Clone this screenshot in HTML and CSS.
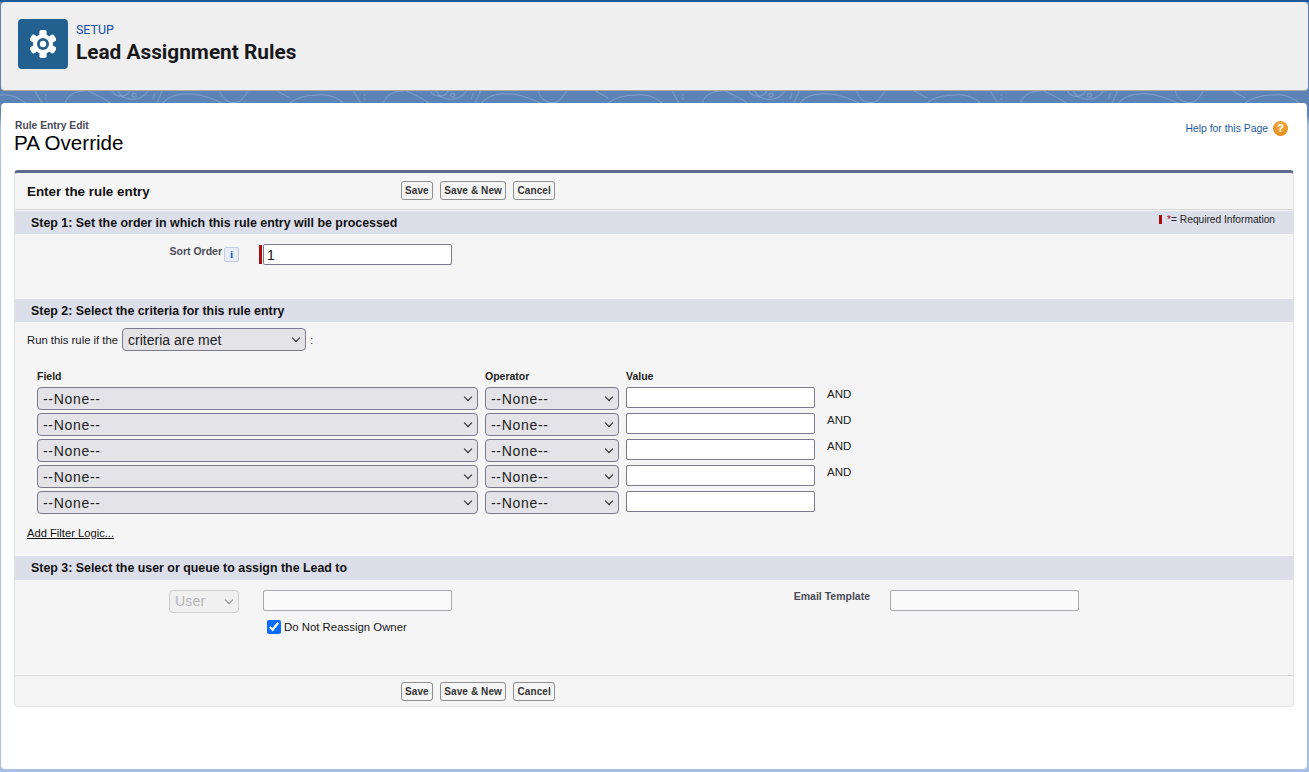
FILE: index.html
```html
<!DOCTYPE html>
<html lang="en">
<head>
    <meta charset="UTF-8">
    <meta name="viewport" content="width=device-width, initial-scale=1.0">
    <title>Lead Assignment Rules</title>
    <link rel="stylesheet" href="styles.css">
</head>
<body>
    <!-- Setup header -->
    <div class="setup-header">
        <div class="setup-icon">
            <svg width="26" height="28" viewBox="-13 -14 26 28">
                <g fill="#fff">
                    <circle r="10"/>
                    <rect x="-3.6" y="-14" width="7.2" height="6" rx="1.8"/>
                    <rect x="-3.6" y="-14" width="7.2" height="6" rx="1.8" transform="rotate(60)"/>
                    <rect x="-3.6" y="-14" width="7.2" height="6" rx="1.8" transform="rotate(120)"/>
                    <rect x="-3.6" y="-14" width="7.2" height="6" rx="1.8" transform="rotate(180)"/>
                    <rect x="-3.6" y="-14" width="7.2" height="6" rx="1.8" transform="rotate(240)"/>
                    <rect x="-3.6" y="-14" width="7.2" height="6" rx="1.8" transform="rotate(300)"/>
                </g>
                <circle r="6" fill="#22608f"/>
                <circle r="3.2" fill="#fff"/>
            </svg>
        </div>
        <div>
            <div class="setup-crumb">SETUP</div>
            <h1>Lead Assignment Rules</h1>
        </div>
    </div>

    <!-- Contour lines between header and page, one tile repeats -->
    <svg class="topo" width="1309" height="12">
        <defs>
            <pattern id="contour" width="318.5" height="12" patternUnits="userSpaceOnUse">
                <g fill="none" stroke="#fff" stroke-opacity="0.22">
                    <path d="M0 4C10 3 18 6 25 12"/>
                    <path d="M35 0L42 12"/>
                    <path d="M46 3V5M46 7V9"/>
                    <path d="M65 12C68 3 75 0 85 0"/>
                    <path d="M88 0C95 3 104 7 110 12"/>
                    <path d="M112 0C115 6 125 8 130 0"/>
                    <circle cx="134" cy="4" r="2"/>
                    <path d="M118 0C122 10 140 12 148 0"/>
                    <path d="M155 2L153 8M162 0L157 12"/>
                    <path d="M163 12C170 3 185 1 200 4C208 6 216 9 222 12"/>
                    <path d="M220 0C222 10 232 14 240 10C243 8 246 3 248 0"/>
                    <path d="M277 0L290 7"/>
                    <path d="M290 12C297 6 308 4 318.5 4"/>
                </g>
            </pattern>
        </defs>
        <rect width="1309" height="12" fill="url(#contour)"/>
    </svg>

    <div class="main-card">
        <div class="title-row">
            <div>
                <div class="page-type">Rule Entry Edit</div>
                <div class="page-name">PA Override</div>
            </div>
            <a href="#" class="help-link">Help for this Page <span class="help-icon">?</span></a>
        </div>

        <div class="panel">
            <div class="panel-bar panel-bar-top">
                <div class="panel-title">Enter the rule entry</div>
                <div class="button-group">
                    <button>Save</button>
                    <button>Save &amp; New</button>
                    <button>Cancel</button>
                </div>
            </div>

            <!-- Step 1 -->
            <div class="step-band step-band-first">
                <span>Step 1: Set the order in which this rule entry will be processed</span>
                <span class="required-note"><i class="required-bar"></i><b>*</b>= Required Information</span>
            </div>
            <div class="step-body step-one">
                <div class="field-row">
                    <div class="label-col">
                        <label class="field-label">Sort Order</label>
                        <span class="info-icon">i</span>
                    </div>
                    <i class="required-mark"></i>
                    <input type="text" class="text-input" value="1">
                </div>
            </div>

            <!-- Step 2 -->
            <div class="step-band">
                <span>Step 2: Select the criteria for this rule entry</span>
            </div>
            <div class="step-body step-two">
                <div class="run-rule">
                    <span>Run this rule if the</span>
                    <div class="select-wrap criteria-select">
                        <select><option>criteria are met</option></select>
                    </div>
                    <span>:</span>
                </div>
                <div class="criteria-grid">
                    <div class="col-head">Field</div>
                    <div class="col-head">Operator</div>
                    <div class="col-head">Value</div>
                    <div></div>

                    <div class="select-wrap"><select><option>--None--</option></select></div>
                    <div class="select-wrap"><select><option>--None--</option></select></div>
                    <input type="text" class="text-input">
                    <div class="and-label">AND</div>

                    <div class="select-wrap"><select><option>--None--</option></select></div>
                    <div class="select-wrap"><select><option>--None--</option></select></div>
                    <input type="text" class="text-input">
                    <div class="and-label">AND</div>

                    <div class="select-wrap"><select><option>--None--</option></select></div>
                    <div class="select-wrap"><select><option>--None--</option></select></div>
                    <input type="text" class="text-input">
                    <div class="and-label">AND</div>

                    <div class="select-wrap"><select><option>--None--</option></select></div>
                    <div class="select-wrap"><select><option>--None--</option></select></div>
                    <input type="text" class="text-input">
                    <div class="and-label">AND</div>

                    <div class="select-wrap"><select><option>--None--</option></select></div>
                    <div class="select-wrap"><select><option>--None--</option></select></div>
                    <input type="text" class="text-input">
                    <div></div>
                </div>
                <a href="#" class="filter-link">Add Filter Logic...</a>
            </div>

            <!-- Step 3 -->
            <div class="step-band step-band-tall">
                <span>Step 3: Select the user or queue to assign the Lead to</span>
            </div>
            <div class="step-body step-three">
                <div class="field-row">
                    <div class="label-col">
                        <div class="select-wrap user-select">
                            <select disabled><option>User</option></select>
                        </div>
                    </div>
                    <div class="mark-space"></div>
                    <input type="text" class="text-input input-disabled">
                    <label class="field-label email-label">Email Template</label>
                    <input type="text" class="text-input input-disabled">
                </div>
                <label class="reassign">
                    <input type="checkbox" checked>
                    <span>Do Not Reassign Owner</span>
                </label>
            </div>

            <div class="panel-bar panel-bar-bottom">
                <div class="panel-title"></div>
                <div class="button-group">
                    <button>Save</button>
                    <button>Save &amp; New</button>
                    <button>Cancel</button>
                </div>
            </div>
        </div>
    </div>
</body>
</html>
```

FILE: styles.css
```css
* {
    margin: 0;
    padding: 0;
    box-sizing: border-box;
}

body {
    font-family: "Liberation Sans", Arial, sans-serif;
    font-size: 11px;
    color: #16161a;
    height: 772px;
    overflow: hidden;
    background: linear-gradient(#5c83b6 0, #5c83b6 115px, #a6bfe2 125px);
    border-top: 2px solid #1d5a99;
}

.setup-header {
    display: flex;
    align-items: center;
    gap: 8px;
    height: 89px;
    margin: 0 1px;
    padding: 0 17px 4px;
    background: #efefef;
    border-bottom: 1px solid #a9a9a9;
    border-radius: 4px;
}

.setup-icon {
    display: flex;
    align-items: center;
    justify-content: center;
    width: 50px;
    height: 50px;
    background: #22608f;
    border-radius: 4px;
}

.setup-crumb {
    font-family: Roboto, sans-serif;
    font-size: 12.4px;
    color: #0f4ea6;
    line-height: 16px;
}

h1 {
    font-family: Roboto, sans-serif;
    font-size: 20.8px;
    font-weight: 700;
    color: #18181b;
    line-height: 28px;
}

.topo {
    display: block;
}

.main-card {
    height: 666px;
    margin: 0 2px 0 1px;
    padding: 0 13px;
    background: #fff;
    border-radius: 4px;
}

.title-row {
    display: flex;
    justify-content: space-between;
    height: 67px;
    padding-top: 16px;
}

.page-type {
    font-size: 10.3px;
    font-weight: 700;
    color: #4a4a56;
    line-height: 13px;
    padding-left: 1px;
}

.page-name {
    font-size: 20.6px;
    line-height: 21px;
    color: #000;
}

.help-link {
    display: flex;
    align-items: center;
    gap: 5px;
    height: 16px;
    margin: 1px 6px 0 0;
    font-size: 10.4px;
    color: #1b5a9c;
    text-decoration: none;
}

.help-icon {
    display: flex;
    align-items: center;
    justify-content: center;
    width: 15px;
    height: 15px;
    border-radius: 50%;
    background: radial-gradient(circle at 50% 35%, #f5b04a, #dd7f10);
    color: #fff;
    font-size: 11px;
    font-weight: 700;
}

.panel {
    height: 537px;
    background: #f5f5f5;
    border: 1px solid #e2e2e2;
    border-top: 3px solid #5d6a8f;
    border-radius: 4px;
}

.panel-bar {
    display: flex;
    align-items: center;
}

.panel-bar-top {
    height: 37px;
    padding-bottom: 2px;
    border-bottom: 1px solid #d6d6d6;
}

.panel-bar-bottom {
    height: 31px;
    padding-top: 1px;
    border-top: 1px solid #d6d6d6;
}

.panel-title {
    width: 386px;
    padding: 2px 0 0 12px;
    font-size: 13.4px;
    font-weight: 700;
    color: #111;
}

.button-group {
    display: flex;
    gap: 7.5px;
}

button {
    height: 19px;
    padding: 0 3px;
    font-family: "Liberation Sans", Arial, sans-serif;
    font-size: 10px;
    font-weight: 700;
    letter-spacing: 0.1px;
    color: #333;
    background: #f5f5f5;
    border: 1px solid #8e8e8e;
    border-radius: 3px;
}

.step-band {
    display: flex;
    justify-content: space-between;
    height: 23px;
    padding: 1px 18px 0 16px;
    background: #dcdeea;
    font-size: 12.4px;
    font-weight: 700;
    line-height: 23px;
    color: #111;
}

.step-band-first {
    margin-top: 1px;
}

.step-band-tall {
    height: 24px;
}

.required-note {
    display: flex;
    align-items: center;
    height: 15px;
    font-size: 10.2px;
    font-weight: 400;
    color: #222;
}

.required-note b {
    color: #b00020;
    font-weight: 400;
    margin-left: 5px;
}

.required-bar {
    width: 3px;
    height: 9px;
    background: #a80d12;
}

.step-body {
    border-bottom: 1px solid #fbfbfb;
}

.step-one {
    height: 65px;
    padding-top: 10px;
}

.step-two {
    height: 234px;
    padding-top: 6px;
}

.step-three {
    height: 95px;
    padding-top: 10px;
}

.field-row {
    display: flex;
    align-items: flex-start;
}

.label-col {
    display: flex;
    justify-content: flex-end;
    align-items: flex-start;
    gap: 2px;
    width: 244px;
    padding-right: 20px;
}

.field-label {
    font-size: 10.5px;
    font-weight: 700;
    color: #4a4a56;
    line-height: 14px;
}

.info-icon {
    width: 15px;
    height: 15px;
    margin-top: 3px;
    border: 1px solid #c3cbd8;
    border-radius: 2px;
    background: #e6edf7;
    font-family: "Liberation Serif", serif;
    font-size: 11px;
    font-weight: 700;
    line-height: 13px;
    text-align: center;
    color: #1a5fc0;
}

.required-mark {
    width: 3px;
    height: 19px;
    margin: 1px 1px 0 0;
    background: #a80d12;
}

.mark-space {
    width: 4px;
}

.text-input {
    width: 189px;
    height: 21px;
    padding: 0 3px;
    font-family: "Liberation Sans", Arial, sans-serif;
    font-size: 14px;
    color: #111;
    background: #fff;
    border: 1px solid #7a7a8c;
    border-radius: 2px;
}

.input-disabled {
    background: #fafafa;
    border-color: #a9a9b0;
}

.email-label {
    width: 418px;
    line-height: 12px;
    text-align: right;
    margin-right: 20px;
}

.select-wrap {
    position: relative;
    height: 23px;
}

.select-wrap::after {
    content: "";
    position: absolute;
    top: 7px;
    right: 7.5px;
    width: 5px;
    height: 5px;
    border-right: 1.5px solid #222;
    border-bottom: 1.5px solid #222;
    transform: rotate(45deg);
    pointer-events: none;
}

select {
    appearance: none;
    display: block;
    width: 100%;
    height: 100%;
    padding: 0 5px;
    font-family: "Liberation Sans", Arial, sans-serif;
    font-size: 14px;
    letter-spacing: 0.7px;
    color: #222;
    background: #e3e3e8;
    border: 1px solid #7a7a8c;
    border-radius: 4px;
}

.run-rule {
    display: flex;
    align-items: center;
    gap: 4px;
    height: 23px;
    padding-left: 12px;
    font-size: 11.3px;
}

.criteria-select {
    width: 184px;
}

.criteria-select select {
    letter-spacing: 0;
}

.user-select {
    width: 70px;
}

.user-select::after {
    border-color: #8a8a8a;
}

.user-select select {
    padding-bottom: 1px;
    letter-spacing: 0.2px;
    color: #9a9a9a;
    background: #eeeef0;
    border-color: #bcbcc2;
}

.criteria-grid {
    display: grid;
    grid-template-columns: 441px 134px 189px auto;
    column-gap: 7px;
    row-gap: 3px;
    justify-content: start;
    margin-top: 19px;
    padding-left: 22px;
}

.col-head {
    padding-bottom: 2px;
    font-size: 10.5px;
    font-weight: 700;
    color: #222;
    line-height: 12px;
}

.and-label {
    padding-left: 5px;
    font-size: 11.5px;
    line-height: 14px;
    color: #222;
}

.filter-link {
    display: block;
    margin: 13px 0 0 12px;
    font-size: 11.2px;
    color: #111;
}

.reassign {
    display: flex;
    align-items: center;
    gap: 3px;
    margin: 7px 0 0 252px;
    font-size: 11.4px;
}

.reassign input {
    width: 14px;
    height: 14px;
    accent-color: #0a6cff;
}
```
